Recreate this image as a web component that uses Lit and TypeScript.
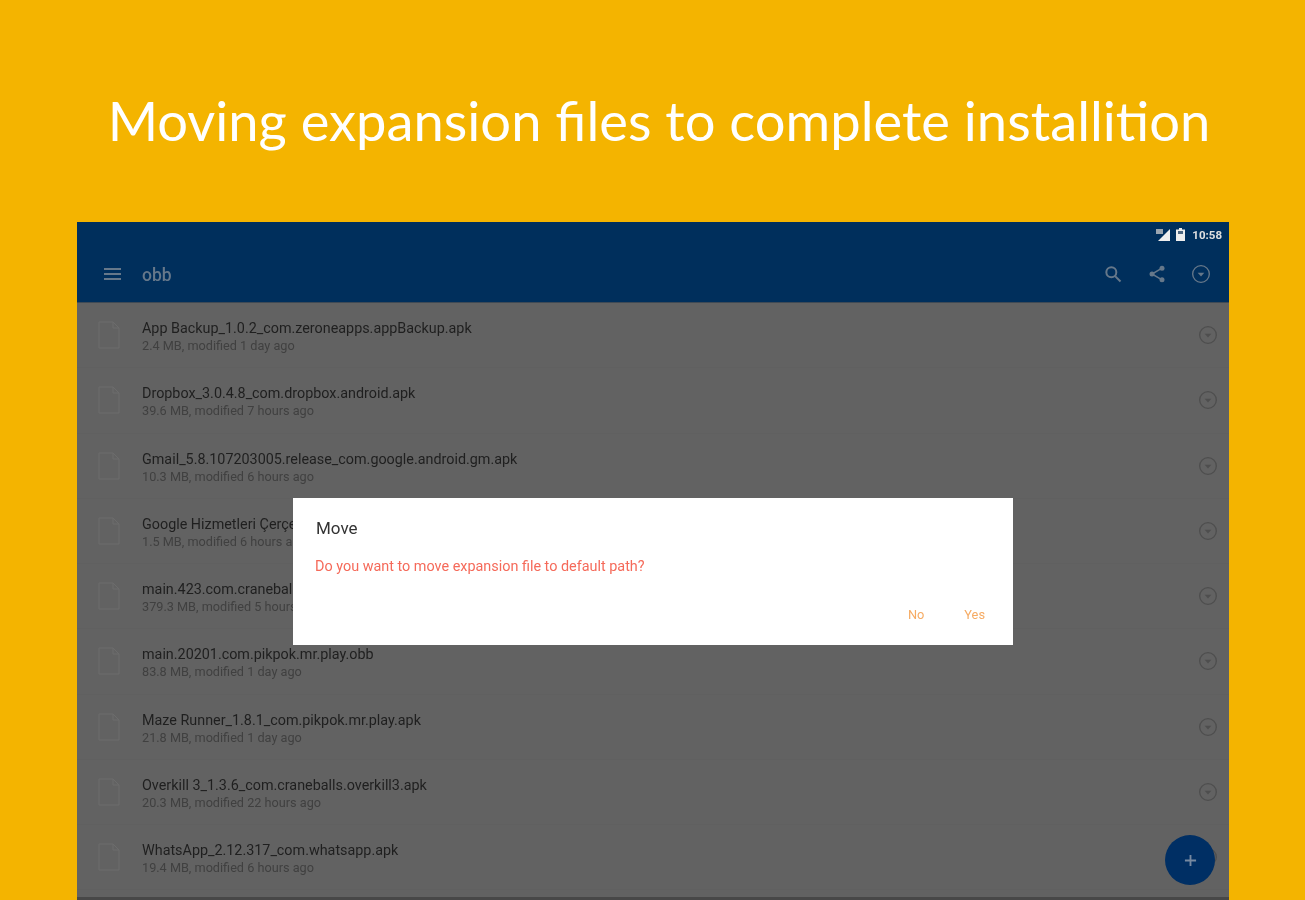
import { LitElement, html, css, svg } from "lit";
import { customElement } from "lit/decorators.js";

const FILES = [
  ["App Backup_1.0.2_com.zeroneapps.appBackup.apk", "2.4 MB, modified 1 day ago"],
  ["Dropbox_3.0.4.8_com.dropbox.android.apk", "39.6 MB, modified 7 hours ago"],
  ["Gmail_5.8.107203005.release_com.google.android.gm.apk", "10.3 MB, modified 6 hours ago"],
  ["Google Hizmetleri Çerçevesi_5.1_com.google.gsf.apk", "1.5 MB, modified 6 hours ago"],
  ["main.423.com.craneballs.overkill3.obb", "379.3 MB, modified 5 hours ago"],
  ["main.20201.com.pikpok.mr.play.obb", "83.8 MB, modified 1 day ago"],
  ["Maze Runner_1.8.1_com.pikpok.mr.play.apk", "21.8 MB, modified 1 day ago"],
  ["Overkill 3_1.3.6_com.craneballs.overkill3.apk", "20.3 MB, modified 22 hours ago"],
  ["WhatsApp_2.12.317_com.whatsapp.apk", "19.4 MB, modified 6 hours ago"],
];

const circleDown = (cls: string) => html`<svg class=${cls} viewBox="0 0 24 24" fill="none" stroke="currentColor">
  <circle cx="12" cy="12" r="10" stroke-width="1.6"></circle>
  <path d="M8 10.5h8L12 15z" fill="currentColor" stroke="none"></path>
</svg>`;

const fileIcon = svg`<path d="M1 1h14l6 6v20H1z M15 1v6h6" fill="none" stroke="currentColor" stroke-width="1"></path>`;

@customElement("app-root")
export class AppRoot extends LitElement {
  static styles = css`
    :host { display: block; width: 1305px; height: 900px; overflow: hidden; background: #f4b400; font-family: Roboto, "Liberation Sans", sans-serif; }
    .headline { height: 222px; box-sizing: border-box; padding: 18px 0 0 13px; display: flex; align-items: center; justify-content: center; color: #fff; font: 400 54.3px Lato, "Open Sans", sans-serif; font-variant-ligatures: common-ligatures; white-space: nowrap; filter: blur(0.6px); }
    .screen { position: relative; margin: 0 76px 0 77px; height: 678px; overflow: hidden; background: #626262; }
    .status { height: 32px; background: #002f5c; display: flex; align-items: center; justify-content: flex-end; gap: 5px; padding: 0 7px 7px 0; box-sizing: border-box; color: #e0e0e0; font-size: 11.5px; font-weight: 700; filter: blur(0.6px); }
    .signal { width: 16px; height: 14px; }
    .battery { width: 9px; height: 13px; margin-right: 2px; }
    .toolbar { height: 49px; background: #002f5c; display: flex; align-items: center; padding: 0 18px 8px 27px; box-sizing: border-box; color: #66788a; border-bottom: 1px solid #3f4a55; }
    .menu { width: 17px; height: 14px; margin-right: 21px; filter: blur(0.4px); }
    .title { flex: 1; padding-top: 2px; font-size: 17.5px; font-weight: 500; filter: blur(0.6px); }
    .tools { display: flex; align-items: center; gap: 24px; filter: blur(0.4px); }
    .tools svg { width: 20px; height: 20px; display: block; }
    .row { height: 65.25px; box-sizing: border-box; display: flex; align-items: center; padding: 0 11px 0 21px; border-bottom: 1px solid #606060; }
    .doc { width: 22px; height: 28px; flex: none; color: #6c6c6c; margin-right: 22px; filter: blur(0.4px); }
    .text { flex: 1; min-width: 0; display: flex; flex-direction: column; gap: 2px; margin-top: 4px; filter: blur(0.6px); }
    .name { font-size: 14.35px; line-height: 16px; color: #1f1f1f; white-space: nowrap; }
    .sub { font-size: 12.7px; line-height: 14px; color: #404040; white-space: nowrap; }
    .more { width: 20px; height: 20px; color: #4e4e4e; flex: none; filter: blur(0.4px); }
    .dialog { position: absolute; left: 216px; top: 276px; width: 720px; height: 147px; box-sizing: border-box; padding: 20px 28px 0 22px; background: #fff; display: flex; flex-direction: column; }
    .d-title { font-size: 17px; line-height: 20px; color: #333; padding-left: 1px; filter: blur(0.5px); }
    .d-text { margin-top: 20px; font-size: 14.4px; line-height: 18px; color: #f56a5a; filter: blur(0.6px); }
    .d-actions { margin-top: 31px; display: flex; justify-content: flex-end; gap: 40px; font-size: 12.8px; line-height: 16px; color: #f6ab63; filter: blur(0.6px); }
    .fab { position: absolute; left: 1088px; top: 613px; width: 50px; height: 50px; border-radius: 50%; background: #002f64; color: #7689a0; display: flex; align-items: center; justify-content: center; }
    .fab svg { width: 13px; height: 13px; filter: blur(0.4px); }
    .edge { position: absolute; left: 0; right: 0; bottom: 0; height: 3px; background: #484848; }
  `;

  render() {
    return html`
      <div class="headline">Moving expansion files to complete installition</div>
      <div class="screen">
        <div class="status">
          <svg class="signal" viewBox="0 0 16 14"><path d="M15 1v12H3z" fill="#eee"></path><path d="M1 1h7v5H1z" fill="#9aa5b0"></path></svg>
          <svg class="battery" viewBox="0 0 9 13"><path d="M3 0h3v1.5h3V13H0V1.5h3z" fill="#eee"></path><path d="M2 3h5v3H2z" fill="#4d6680"></path></svg>
          <span>10:58</span>
        </div>
        <div class="toolbar">
          <svg class="menu" viewBox="0 0 17 14" fill="currentColor"><path d="M0 1h17v2H0zM0 6h17v2H0zM0 11h17v2H0z"></path></svg>
          <span class="title">obb</span>
          <div class="tools">
            <svg viewBox="0 0 24 24" fill="none" stroke="currentColor" stroke-width="2.4"><circle cx="10" cy="10" r="6"></circle><path d="M14.5 14.5L21 21"></path></svg>
            <svg viewBox="0 0 24 24" fill="none" stroke="currentColor" stroke-width="1.8"><path d="M18 5L6 12l12 7"></path><g fill="currentColor" stroke="none"><circle cx="18" cy="5" r="3"></circle><circle cx="6" cy="12" r="3"></circle><circle cx="18" cy="19" r="3"></circle></g></svg>
            ${circleDown("")}
          </div>
        </div>
        ${FILES.map(([name, sub]) => html`
          <div class="row">
            <svg class="doc" viewBox="0 0 22 28">${fileIcon}</svg>
            <div class="text"><span class="name">${name}</span><span class="sub">${sub}</span></div>
            ${circleDown("more")}
          </div>`)}
        <div class="dialog">
          <div class="d-title">Move</div>
          <div class="d-text">Do you want to move expansion file to default path?</div>
          <div class="d-actions"><span>No</span><span>Yes</span></div>
        </div>
        <div class="fab"><svg viewBox="0 0 14 14" fill="currentColor"><path d="M6 1h2v5h5v2H8v5H6V8H1V6h5z"></path></svg></div>
        <div class="edge"></div>
      </div>
    `;
  }
}
